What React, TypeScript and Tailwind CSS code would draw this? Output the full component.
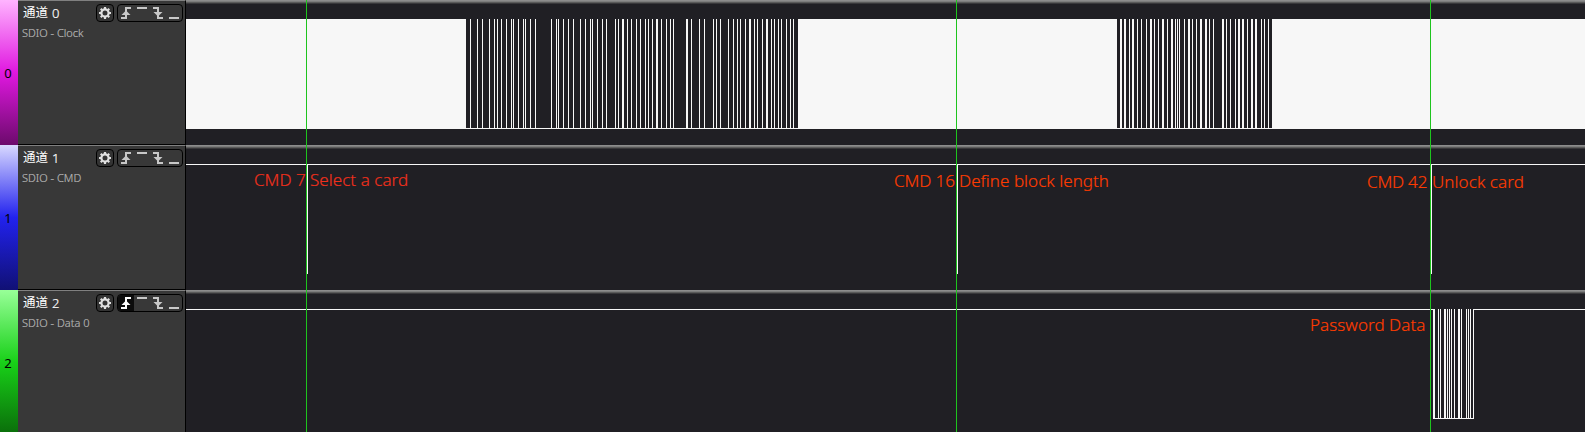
import React from "react";

type Bar = [x: number, width: number];

interface Channel {
  index: number;
  role: string;
  swatch: string;
  risingActive?: boolean;
  wave: React.ReactNode;
}

const WAVE_LEFT = 186;

const single = (offset: number, xs: number[]): Bar[] => xs.map((x) => [x + offset, 1]);

const clockBurstA: Bar[] = [
  ...single(455, [
    15, 22, 27, 34, 39, 42, 46, 51, 56, 58, 63, 68, 70, 75, 80, 96, 101, 103, 108, 113, 118, 125, 130, 135, 137, 142,
    147, 151, 160, 163, 172, 176,
  ]),
  [622, 2],
  ...single(630, [
    6, 10, 15, 18, 22, 31, 36, 40, 43, 61, 69, 74, 83, 86, 90, 98, 103, 107, 110, 115, 124, 127, 132, 141, 144, 148,
    151, 156, 160, 163,
  ]),
  [656, 2],
  [686, 2],
  [749, 2],
  [766, 2],
];

const clockBurstB: Bar[] = [
  ...single(1110, [
    19, 27, 31, 36, 44, 48, 57, 65, 67, 69, 74, 82, 86, 99, 103, 116, 120, 125, 137, 151, 154, 158,
  ]),
  ...[10, 14, 22, 40, 52, 61, 78, 90, 95, 112, 128, 132, 141, 145].map((x): Bar => [x + 1110, 2]),
];

const dataBurst: Bar[] = [
  [1433, 2],
  [1444, 2],
  [1458, 2],
  ...single(1300, [138, 140, 147, 149, 151, 154, 161, 166, 168, 170, 173]),
];

function Bars({ bars }: { bars: Bar[] }) {
  return (
    <>
      {bars.map(([x, w]) => (
        <rect key={x} x={x} y={19} width={w} height={110} />
      ))}
    </>
  );
}

const clockWave = (
  <>
    <rect x={186} y={19} width={280} height={110} />
    <Bars bars={clockBurstA} />
    <rect x={466} y={128} width={332} height={1} />
    <rect x={798} y={19} width={319} height={110} />
    <Bars bars={clockBurstB} />
    <rect x={1117} y={128} width={155} height={1} />
    <rect x={1272} y={19} width={313} height={110} />
  </>
);

const commandWave = (
  <>
    <rect x={186} y={19} width={1399} height={1} />
    {[307, 957, 1431].map((x) => (
      <rect key={x} x={x} y={19} width={1} height={110} />
    ))}
  </>
);

const dataWave = (
  <>
    <rect x={186} y={19} width={1247} height={1} />
    <Bars bars={dataBurst} />
    <rect x={1433} y={128} width={41} height={1} />
    <rect x={1474} y={19} width={111} height={1} />
  </>
);

const channels: Channel[] = [
  { index: 0, role: "SDIO - Clock", swatch: "bg-linear-to-b/srgb from-[#ffb4ff] via-[#e018e0] to-[#6c0a6c]", wave: clockWave },
  { index: 1, role: "SDIO - CMD", swatch: "bg-linear-to-b/srgb from-[#d8d8ff] via-[#2222ee] to-[#101074]", wave: commandWave },
  {
    index: 2,
    role: "SDIO - Data 0",
    swatch: "bg-linear-to-b/srgb from-[#98ff98] via-[#18d018] to-[#0a6c0a]",
    risingActive: true,
    wave: dataWave,
  },
];

function GearIcon() {
  return (
    <svg width="12" height="12" viewBox="-6 -6 12 12" fill="none" stroke="#e0e0e0">
      <circle r="3.6" strokeWidth="2.2" />
      {[0, 45, 90, 135, 180, 225, 270, 315].map((a) => (
        <path key={a} d="M0 -4V-6" strokeWidth="2.2" transform={`rotate(${a})`} />
      ))}
    </svg>
  );
}

function TriggerIcons({ risingActive }: { risingActive?: boolean }) {
  return (
    <svg width="64" height="16" viewBox="118 5 64 16" fill="#c8c8c8">
      {risingActive && <rect x="118" y="5" width="16" height="16" fill="#0c0c0c" />}
      <g fill={risingActive ? "#ffffff" : "#c8c8c8"}>
        <path d="M125 7h6v2h-4v10h-6v-2h4z" />
        <path d="M126 10.5l4.5 4.5h-9z" />
      </g>
      <path d="M137 7h10v2h-10z" />
      <path d="M153 7h6v10h4v2h-6v-10h-4z" />
      <path d="M158 16.5l4.5-4.5h-9z" />
      <path d="M169 17h10v2h-10z" />
    </svg>
  );
}

function ChannelRow({ channel }: { channel: Channel }) {
  return (
    <div className="flex h-[145px] shrink-0">
      <div
        className={`flex w-[18px] shrink-0 items-center justify-center pt-[2px] pr-[2px] text-[13px] leading-none text-black ${channel.swatch}`}
      >
        {channel.index}
      </div>
      <div className="flex w-[168px] shrink-0 flex-col border-t border-r border-b border-t-[#808080] border-r-black border-b-black bg-[#383838]">
        <div className="flex pt-[3px] pl-[5px]">
          <div className="flex h-[18px] w-[73px] items-center gap-[4px] text-[13px] leading-[18px] whitespace-pre text-white">
            <span className="text-[12.5px]">通道</span>
            <span className="font-light [-webkit-text-stroke:0.2px_#ffffff]">{channel.index}</span>
          </div>
          <div className="flex h-[18px] w-[18px] items-center justify-center rounded-[4px] border border-black bg-[#333333]">
            <GearIcon />
          </div>
          <div className="ml-[3px] flex h-[18px] w-[66px] items-center overflow-hidden rounded-[4px] border border-black">
            <TriggerIcons risingActive={channel.risingActive} />
          </div>
        </div>
        <div className="mt-[4px] pl-[4px] text-[11px] leading-[14px] font-light text-[#b4b4b4] [-webkit-text-stroke:0.2px_currentColor]">
          {channel.role}
        </div>
      </div>
      <div className="flex-1 bg-[#201f24]">
        <svg width="1399" height="145" viewBox={`${WAVE_LEFT} 0 1399 145`} fill="#f7f7f7" shapeRendering="crispEdges">
          <rect x={186} y={0} width={1399} height={1} fill="#8c8c8c" />
          <rect x={186} y={1} width={1399} height={1} fill="#7c7c7c" />
          <rect x={186} y={2} width={1399} height={1} fill="#5a5a5a" />
          <rect x={186} y={3} width={1399} height={1} fill="#38373a" />
          {channel.wave}
        </svg>
      </div>
    </div>
  );
}

const label = "absolute text-[17px] leading-[24px] whitespace-nowrap font-light [-webkit-text-stroke:0.2px_currentColor]";

export default function App() {
  return (
    <div className="relative flex h-[432px] w-[1585px] flex-col overflow-hidden bg-[#201f24] font-['Noto_Sans','Noto_Sans_CJK_SC',sans-serif]">
      {channels.map((c) => (
        <ChannelRow key={c.index} channel={c} />
      ))}
      <div className="absolute top-0 left-[306px] h-full w-px bg-[#1ec41e]" />
      <div className="absolute top-0 left-[956px] h-full w-px bg-[#1ec41e]" />
      <div className="absolute top-0 left-[1430px] h-full w-px bg-[#1ec41e]" />
      <span className={`${label} top-[168px] left-[254px] text-[#f0301c]`}>CMD 7</span>
      <span className={`${label} top-[168px] left-[310px] tracking-[0.05px] text-[#f0301c]`}>Select a card</span>
      <span className={`${label} top-[169px] left-[894px] tracking-[-0.1px] text-[#ff3c00]`}>CMD 16</span>
      <span className={`${label} top-[169px] left-[959px] tracking-[0.04px] text-[#ff3c00]`}>Define block length</span>
      <span className={`${label} top-[170px] left-[1367px] tracking-[-0.2px] text-[#ff3c00]`}>CMD 42</span>
      <span className={`${label} top-[170px] left-[1432px] tracking-[0.08px] text-[#ff3c00]`}>Unlock card</span>
      <span className={`${label} top-[313px] left-[1310px] tracking-[0.06px] text-[#ff3c00]`}>Password Data</span>
    </div>
  );
}
